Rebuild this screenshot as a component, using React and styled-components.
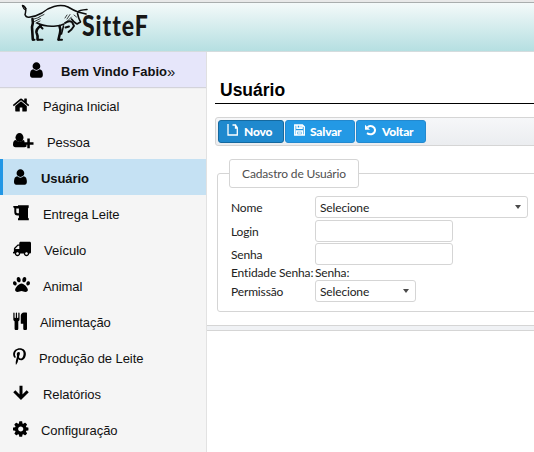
import React from "react";
import styled, { createGlobalStyle } from "styled-components";
import { FaPaw, FaPinterestP, FaTruck } from "react-icons/fa";

const GlobalStyle = createGlobalStyle`
  * { box-sizing: border-box; }
  body { margin: 0; overflow: hidden; background: #fff; }
`;

const Page = styled.div`
  width: 534px;
  height: 452px;
  overflow: hidden;
  font-family: "Liberation Sans", Arial, sans-serif;
  color: #111;
`;

const Header = styled.header`
  height: 52px;
  border-top: 2px solid #e8e8e8;
  border-bottom: 1px solid #d4dcde;
  background: linear-gradient(#f5fafa, #b5dfe1);
  box-shadow: inset 0 1px #a9adad;
  display: flex;
`;

const Bull = styled.svg`
  width: 70px;
  height: 40px;
  margin: 1px 0 0 20px;
  flex: none;
`;

const Brand = styled.span`
  font: 900 28px/36px Lato, sans-serif;
  letter-spacing: 1.2px;
  margin: 5px 0 0 -8px;
  color: #171717;
  transform: scaleX(0.82);
  transform-origin: left;
`;

const Body = styled.div`
  display: flex;
  height: 400px;
`;

const Sidebar = styled.nav`
  width: 207px;
  flex: none;
  background: #f5f5f5;
  border-right: 1px solid #e2e2e2;
`;

const Welcome = styled.div`
  width: 206px;
  height: 35px;
  display: flex;
  align-items: center;
  padding: 3px 0 0 30px;
  background: #e6e6fa;
  box-shadow: 0 1px 1px #d3d3da;
  font-size: 13px;
  font-weight: bold;
  white-space: nowrap;
`;

const WelcomeText = styled.span`
  margin-left: 16px;
`;

const Chevrons = styled.span`
  font-weight: normal;
  display: inline-block;
  transform: scale(1.15);
  transform-origin: left;
`;

const Item = styled.a`
  height: 36px;
  display: flex;
  align-items: center;
  padding: 2px 0 0 ${(p) => (p.$active ? 11 : 13)}px;
  border-left: ${(p) => (p.$active ? "3px solid #2196e5" : "0")};
  background: ${(p) => (p.$active ? "#c5e1f3" : "transparent")};
  font-size: 13px;
  letter-spacing: -0.07px;
  font-weight: ${(p) => (p.$active ? "bold" : "normal")};
  color: #111;
`;

const IconSlot = styled.span`
  width: ${(p) => p.$width}px;
  height: 18px;
  flex: none;
  display: flex;
  align-items: center;
  margin-top: -3px;
  color: #000;
  svg { flex: none; overflow: visible; transform: ${(p) => (p.$flip ? "scaleX(-1)" : "none")}; }
`;

const Pinterest = styled(FaPinterestP)`
  margin-left: -2px;
`;

const Main = styled.main`
  width: 327px;
  flex: none;
`;

const Workspace = styled.section`
  height: 273px;
  padding: 26px 0 0 8px;
  overflow: hidden;
`;

const Title = styled.h1`
  margin: 0;
  height: 26px;
  padding-left: 5px;
  border-bottom: 1px solid #000;
  font-size: 17.5px;
  line-height: 25px;
  font-weight: bold;
  color: #000;
`;

const Toolbar = styled.div`
  margin-top: 13px;
  width: 340px;
  height: 29px;
  padding: 2px;
  display: flex;
  gap: 1px;
  border: 1px solid #d5d5d5;
  border-radius: 3px;
  background: linear-gradient(#f6f7f9, #ebedf0);
`;

const Button = styled.button`
  width: ${(p) => p.$width}px;
  height: 23px;
  padding: 0 0 0 8px;
  display: flex;
  align-items: center;
  border: 1px solid ${(p) => (p.$pressed ? "#15699f" : "#2389cf")};
  border-radius: 3px;
  background: ${(p) => (p.$pressed ? "#1f89ce" : "#2399e5")};
  color: #fff;
  font: 900 12px/20px Lato, sans-serif;
  letter-spacing: -0.2px;
  svg { margin-top: -3px; flex: none; }
`;

const ButtonLabel = styled.span`
  margin: 1px 0 0 ${(p) => p.$gap}px;
`;

const Fieldset = styled.div`
  margin: 27px 0 0 2px;
  width: 340px;
  height: 139px;
  border: 1px solid #d5d5d5;
  border-radius: 3px;
  font: 12px/16px Lato, sans-serif;
  letter-spacing: -0.15px;
  color: #222;
`;

const Legend = styled.div`
  width: 130px;
  height: 29px;
  margin: -15px 0 0 11px;
  padding-top: 6px;
  text-align: center;
  border: 1px solid #d5d5d5;
  border-radius: 3px;
  background: #fff;
  color: #4f4f4f;
`;

const Form = styled.div`
  margin: 8px 0 0 13px;
  display: grid;
  grid-template-columns: 84px 240px;
  grid-template-rows: 24px 23px 23px 14px 22px;
  white-space: nowrap;
`;

const Label = styled.label`
  align-self: start;
  padding-top: ${(p) => (p.$tight ? 0 : 4)}px;
  margin-top: ${(p) => (p.$tight ? -1 : 0)}px;
`;

const Field = styled.div`
  width: ${(p) => p.$width}px;
  height: 22px;
  padding: 1px 5px 0 4px;
  display: flex;
  align-items: center;
  justify-content: space-between;
  border: 1px solid #d5d5d5;
  border-radius: 3px;
  background: #fff;
`;

const Caret = styled.i`
  border: 4px solid transparent;
  border-width: 4px 3.5px 0;
  border-top-color: #4a4a4a;
  margin: -2px 1px 0 0;
`;

const Splitter = styled.div`
  height: 6px;
  border: 1px solid #d5d5d5;
  border-width: 1px 0;
  background: #f0f2f5;
`;

const UserIcon = () => (
  <svg width="18" height="18" viewBox="256 0 1792 1792" fill="currentColor">
    <path d="M1536 1399q0 109-62.500 187t-150.500 78h-854q-88 0-150.500-78t-62.500-187q0-85 8.500-160.500t31.500-152 58.500-131 94-89 134.500-34.500q131 128 313 128t313-128q76 0 134.500 34.500t94 89 58.500 131 31.500 152 8.500 160.500zm-256-887q0 159-112.500 271.500t-271.500 112.500-271.500-112.500-112.500-271.500 112.500-271.500 271.500-112.500 271.500 112.500 112.500 271.500z" />
  </svg>
);

const HomeIcon = () => (
  <svg width="18" height="18" viewBox="96 0 1792 1792" fill="currentColor">
    <path d="M1472 992v480q0 26-19 45t-45 19h-384v-384h-256v384h-384q-26 0-45-19t-19-45v-480q0-1 .5-3t.5-3l575-474 575 474q1 2 1 6zm223-69l-62 74q-8 9-21 11h-3q-13 0-21-7l-692-577-692 577q-12 8-24 7-13-2-21-11l-62-74q-8-10-7-23.500t11-21.500l719-599q32-26 76-26t76 26l244 204v-195q0-14 9-23t23-9h192q14 0 23 9t9 23v408l219 182q10 8 11 21.500t-7 23.500z" />
  </svg>
);

const UserPlusIcon = () => (
  <svg width="21" height="18" viewBox="0 0 21 18" fill="currentColor">
    <ellipse cx="6.500" cy="5.500" rx="4" ry="4.400" />
    <path d="M3 8q3.500 3.500 7 0 1 0 1.500 1v2.500h2v3q-.8.800-2 .8h-9Q0 15.200 0 12.600 0 8 3 8z" />
    <path d="M14.300 6.500h2.500v3.700h3.700v2.500h-3.700v3.600h-2.500v-3.600h-3.600v-2.500h3.600z" />
  </svg>
);

const MugIcon = () => (
  <svg width="17" height="16" viewBox="0 0 17 16" fill="currentColor">
    <path fillRule="evenodd" d="M5 .2h10.700v2.200l-.7 1v9.400l.8.800v1.700H5v-1.700l.9-.8v-2.300H4.500Q1.300 10.500 1.300 7V3.300L.3 2.300V1h4.700zM3.300 3.400v3.500q0 1.300 1.300 1.300h1.300V3.400z" />
  </svg>
);

const CutleryIcon = () => (
  <svg width="18" height="18" viewBox="190 0 1792 1856" fill="currentColor">
    <path d="M832 128v640q0 61-35.500 111t-92.500 70v779q0 52-38 90t-90 38h-128q-52 0-90-38t-38-90v-779q-57-20-92.500-70t-35.500-111v-640q0-26 19-45t45-19 45 19 19 45v416q0 26 19 45t45 19 45-19 19-45v-416q0-26 19-45t45-19 45 19 19 45v416q0 26 19 45t45 19 45-19 19-45v-416q0-26 19-45t45-19 45 19 19 45zm768 0v1600q0 52-38 90t-90 38h-128q-52 0-90-38t-38-90v-512h-224q-13 0-22.500-9.500t-9.500-22.500v-800q0-132 94-226t226-94h256q26 0 45 19t19 45z" />
  </svg>
);

const ArrowIcon = () => (
  <svg width="16" height="16" viewBox="0 0 16 16" fill="none" stroke="currentColor" strokeWidth="3">
    <path d="M8 .8v12M1.300 6.300L8 13l6.700-6.700" />
  </svg>
);

const CogIcon = () => (
  <svg width="18" height="18" viewBox="128 0 1792 1792" fill="currentColor">
    <path d="M1152 896q0-106-75-181t-181-75-181 75-75 181 75 181 181 75 181-75 75-181zm512-109v222q0 12-8 23t-20 13l-185 28q-19 54-39 91 35 50 107 138 10 12 10 25t-9 23q-27 37-99 108t-94 71q-12 0-26-9l-138-108q-44 23-91 38-16 136-29 186-7 28-36 28h-222q-14 0-24.500-8.500t-11.500-21.500l-28-184q-49-16-90-37l-141 107q-10 9-25 9-14 0-25-11-126-114-165-168-7-10-7-23 0-12 8-23 15-21 51-66.500t54-70.500q-27-50-41-99l-183-27q-13-2-21-12.500t-8-23.500v-222q0-12 8-23t19-13l186-28q14-46 39-92-40-57-107-138-10-12-10-24 0-10 9-23 26-36 98.500-107.500t94.500-71.500q13 0 26 10l138 107q44-23 91-38 16-136 29-186 7-28 36-28h222q14 0 24.500 8.500t11.500 21.500l28 184q49 16 90 37l142-107q9-9 24-9 13 0 25 10 129 119 165 170 7 8 7 22 0 12-8 23-15 21-51 66.500t-54 70.500q26 50 41 98l183 28q13 2 21 12.500t8 23.500z" />
  </svg>
);

const PageIcon = () => (
  <svg width="11" height="12" viewBox="0 0 11 12" fill="none" stroke="#fff" strokeWidth="1.300">
    <path d="M1 0v11h9.300V4M5.500 1h3v3h2M8.500 1l2 3" />
  </svg>
);

const SaveIcon = () => (
  <svg width="11" height="12" viewBox="0 0 11 12" fill="none" stroke="#fff" strokeWidth="1.500">
    <path d="M.8 1h7.600l2 2v8H.8zM3 1v3.300h5V1M2.700 11V7h5.600v4M4 9h3M6 1v3" />
  </svg>
);

const UndoIcon = () => (
  <svg width="11" height="12" viewBox="0 0 11 12" fill="none" stroke="#fff" strokeWidth="2">
    <path d="M2.500 3.300Q5 1.300 7.600 2.500T10 6.400 7.200 10 2 9.200" />
    <path fill="#fff" stroke="none" d="M0 .7v5h5z" />
  </svg>
);

const BullLogo = () => (
  <Bull viewBox="20 3 70 40" fill="none" stroke="#0c0c0c" strokeLinecap="round" strokeLinejoin="round">
    <path strokeWidth="1.500" d="M22.500 5.500Q26 7 25.800 10T25 14.500Q26 17.500 29 17.200 36 16.500 42 13 48 8 54 6.500 62 4.500 68 7 73 10 78 12" />
    <path strokeWidth="1.100" d="M22.500 6q1 3 3 4M23.500 5.500l2.500 3" />
    <path strokeWidth="1.600" d="M78 12q1-2 9-2.500M78 12l8 2M77.500 13.500q1 5 3 8.500l-3.500 2q-3-1.500-5.500-5" />
    <path strokeWidth="2.600" d="M32.500 19q1 4-.5 8l.8 12.500M41 25.500q-5 3.500-4.500 7 1.500 3 1 7M59.500 26q1.500 4 .5 7l-1.500 6.500" />
    <path strokeWidth="2" d="M33 39.700h1.500M38 39.700h4.500M58.500 39.700h3.500M40 26l2.500 2.500" />
    <path strokeWidth="1.500" d="M37 23q8 4 19 3 4 0 8-2M61.500 34l2-8" />
    <path strokeWidth="1.900" d="M65 23q4-3 7-1l2 4-2.500 3.500-3 2.500M65.500 27.500l3.500-1" />
    <path strokeWidth=".8" d="M34 19l5-1.500M34.500 21.500l6-3M36 23l4-2M39 17l5-2.500M67 19l3-4.500M67.500 21l4-4M65 18l2-3M74 15l2.500 2" />
  </Bull>
);

const menu = [
  { text: "Página Inicial", icon: <HomeIcon />, width: 30 },
  { text: "Pessoa", icon: <UserPlusIcon />, width: 34 },
  { text: "Usuário", icon: <UserIcon />, width: 27, active: true },
  { text: "Entrega Leite", icon: <MugIcon />, width: 30 },
  { text: "Veículo", icon: <FaTruck size={18} />, width: 31, flip: true },
  { text: "Animal", icon: <FaPaw size={17} />, width: 30 },
  { text: "Alimentação", icon: <CutleryIcon />, width: 27 },
  { text: "Produção de Leite", icon: <Pinterest size={17} />, width: 26 },
  { text: "Relatórios", icon: <ArrowIcon />, width: 30 },
  { text: "Configuração", icon: <CogIcon />, width: 28 },
];

export default function App() {
  return (
    <Page>
      <GlobalStyle />
      <Header>
        <BullLogo />
        <Brand>SitteF</Brand>
      </Header>
      <Body>
        <Sidebar>
          <Welcome>
            <IconSlot $width={15}><UserIcon /></IconSlot>
            <WelcomeText>Bem Vindo Fabio<Chevrons>»</Chevrons></WelcomeText>
          </Welcome>
          {menu.map((m) => (
            <Item key={m.text} $active={m.active}>
              <IconSlot $width={m.width} $flip={m.flip}>{m.icon}</IconSlot>
              {m.text}
            </Item>
          ))}
        </Sidebar>
        <Main>
          <Workspace>
            <Title>Usuário</Title>
            <Toolbar>
              <Button $width={66} $pressed><PageIcon /><ButtonLabel $gap={6}>Novo</ButtonLabel></Button>
              <Button $width={70}><SaveIcon /><ButtonLabel $gap={5}>Salvar</ButtonLabel></Button>
              <Button $width={70}><UndoIcon /><ButtonLabel $gap={6}>Voltar</ButtonLabel></Button>
            </Toolbar>
            <Fieldset>
              <Legend>Cadastro de Usuário</Legend>
              <Form>
                <Label>Nome</Label>
                <Field $width={213}>Selecione<Caret /></Field>
                <Label>Login</Label>
                <Field $width={138} />
                <Label>Senha</Label>
                <Field $width={138} />
                <Label $tight>Entidade Senha:</Label>
                <Label $tight>Senha:</Label>
                <Label>Permissão</Label>
                <Field $width={101}>Selecione<Caret /></Field>
              </Form>
            </Fieldset>
          </Workspace>
          <Splitter />
        </Main>
      </Body>
    </Page>
  );
}
